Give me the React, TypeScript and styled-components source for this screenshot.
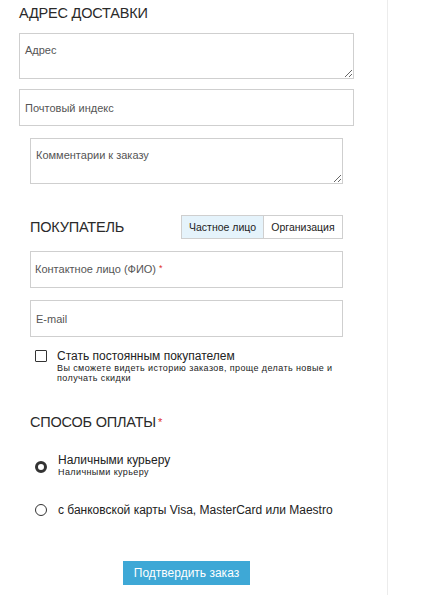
import React, { useState } from "react";
import styled, { createGlobalStyle } from "styled-components";

const GlobalStyle = createGlobalStyle`
  html, body {
    margin: 0;
    padding: 0;
    background: #fff;
    font-family: Arial, "Liberation Sans", sans-serif;
    color: #222;
  }
  * { box-sizing: border-box; }
`;

const App = () => {
  const [person, setPerson] = useState("private");
  const [payment, setPayment] = useState("cash");

  return (
    <Page>
      <GlobalStyle />
      <Column>
        <Title>АДРЕС ДОСТАВКИ</Title>
        <Area placeholder="Адрес" />
        <Field placeholder="Почтовый индекс" />
        <Inner>
          <Area placeholder="Комментарии к заказу" />

          <TitleRow>
            <Title>ПОКУПАТЕЛЬ</Title>
            <Toggle>
              <ToggleButton
                $active={person === "private"}
                onClick={() => setPerson("private")}
              >
                Частное лицо
              </ToggleButton>
              <ToggleButton
                $active={person === "org"}
                onClick={() => setPerson("org")}
              >
                Организация
              </ToggleButton>
            </Toggle>
          </TitleRow>
          <FieldBox>
            <Field />
            <FakePlaceholder>
              Контактное лицо (ФИО) <Star>*</Star>
            </FakePlaceholder>
          </FieldBox>
          <Field placeholder="E-mail" />

          <Check>
            <CheckBox />
            <div>
              <CheckLabel>Стать постоянным покупателем</CheckLabel>
              <Hint>
                Вы сможете видеть историю заказов, проще делать новые и
                получать скидки
              </Hint>
            </div>
          </Check>

          <PayTitle>
            СПОСОБ ОПЛАТЫ<Star $big>*</Star>
          </PayTitle>
          <Option onClick={() => setPayment("cash")}>
            <Radio $checked={payment === "cash"} />
            <div>
              <OptionLabel>Наличными курьеру</OptionLabel>
              <Hint>Наличными курьеру</Hint>
            </div>
          </Option>
          <Option onClick={() => setPayment("card")}>
            <Radio $checked={payment === "card"} />
            <OptionLabel>с банковской карты Visa, MasterCard или Maestro</OptionLabel>
          </Option>

          <Submit>Подтвердить заказ</Submit>
        </Inner>
      </Column>
    </Page>
  );
};

const Page = styled.div`
  height: 100vh;
  display: flex;
  overflow: hidden;
`;

const Column = styled.div`
  width: 388px;
  border-right: 1px solid #ececec;
  padding: 4px 33px 0 19px;
`;

const Inner = styled.div`
  margin: 0 11px;
`;

const Title = styled.h2`
  margin: 0;
  font-size: 14.5px;
  font-weight: normal;
  line-height: 18px;
  color: #2a2a2a;
  letter-spacing: -0.2px;
`;

const inputBase = `
  display: block;
  width: 100%;
  border: 1px solid #cfcfcf;
  background: #fff;
  font-family: Arial, "Liberation Sans", sans-serif;
  font-size: 11px;
  color: #333;
  outline: none;
  &::placeholder { color: #555; }
`;

const Area = styled.textarea`
  ${inputBase}
  height: 46px;
  margin: 11px 0 10px;
  padding: 10px 5px;
  resize: vertical;
`;

const Field = styled.input`
  ${inputBase}
  height: 37px;
  margin-bottom: 12px;
  padding: 0 5px;
`;

const FieldBox = styled.div`
  position: relative;
`;

const FakePlaceholder = styled.span`
  position: absolute;
  left: 5px;
  top: 12px;
  font-size: 11px;
  color: #555;
  pointer-events: none;
`;

const Star = styled.span<{ $big?: boolean }>`
  color: #e0302a;
  font-size: ${(p) => (p.$big ? "11px" : "9px")};
  vertical-align: top;
  margin-left: ${(p) => (p.$big ? "2px" : "0")};
`;

const TitleRow = styled.div`
  display: flex;
  align-items: center;
  justify-content: space-between;
  margin: 31px 0 12px;
`;

const Toggle = styled.div`
  display: flex;
  border: 1px solid #cfcfcf;
`;

const ToggleButton = styled.button<{ $active: boolean }>`
  height: 22px;
  padding: 0 6px;
  border: none;
  border-left: 1px solid #cfcfcf;
  &:first-child { border-left: none; width: 81px; }
  &:last-child { width: 79px; }
  background: ${(p) => (p.$active ? "#e5f3fb" : "#fff")};
  font-family: Arial, "Liberation Sans", sans-serif;
  font-size: 10.5px;
  color: #222;
  cursor: pointer;
`;

const Check = styled.label`
  display: flex;
  gap: 10px;
  margin-top: 2px;
  padding-left: 5px;
`;

const CheckBox = styled.span`
  flex: none;
  width: 12px;
  height: 12px;
  margin-top: 1px;
  border: 1.5px solid #333;
  border-radius: 1px;
`;

const CheckLabel = styled.div`
  font-size: 12px;
  line-height: 14px;
  color: #222;
`;

const Hint = styled.div`
  font-size: 9px;
  line-height: 10px;
  color: #222;
  max-width: 290px;
  letter-spacing: 0.4px;
`;

const PayTitle = styled(Title)`
  margin-top: 30px;
`;

const Option = styled.div`
  display: flex;
  align-items: flex-start;
  gap: 11px;
  padding-left: 5px;
  margin-top: 22px;
  cursor: pointer;
  &:last-of-type {
    margin-top: 26px;
    align-items: center;
  }
`;

const Radio = styled.span<{ $checked: boolean }>`
  flex: none;
  width: 12px;
  height: 12px;
  margin-top: ${(p) => (p.$checked ? "8px" : "0")};
  border-radius: 50%;
  border: ${(p) => (p.$checked ? "3.5px solid #333" : "1.5px solid #333")};
  background: #fff;
`;

const OptionLabel = styled.div`
  font-size: 12px;
  line-height: 14px;
  color: #222;
`;

const Submit = styled.button`
  display: block;
  margin: 44px 0 0 93px;
  width: 127px;
  height: 24px;
  border: none;
  background: #3ea8d6;
  color: #fff;
  font-family: Arial, "Liberation Sans", sans-serif;
  font-size: 12px;
  cursor: pointer;
`;

export default App;
